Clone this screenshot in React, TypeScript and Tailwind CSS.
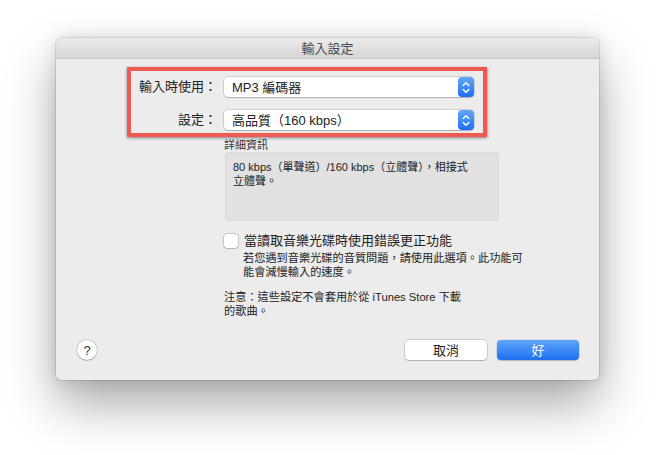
import React from "react";

const font = { fontFamily: '"Liberation Sans", "Noto Sans CJK TC", sans-serif' };

function Stepper() {
  return (
    <div className="flex h-full w-[16px] items-center justify-center rounded-[4px] bg-gradient-to-b from-[#64a6fa] to-[#1b6ef2]">
      <svg width="8" height="13" viewBox="0 0 8 13" fill="none" stroke="white" strokeWidth="1.4" strokeLinecap="round" strokeLinejoin="round">
        <path d="M1.2 4.6 L4 1.8 L6.8 4.6" />
        <path d="M1.2 8.4 L4 11.2 L6.8 8.4" />
      </svg>
    </div>
  );
}

function Select({ value }: { value: string }) {
  return (
    <div className="flex h-[20px] w-[250px] items-center justify-between rounded-[4px] bg-white pl-[8px] shadow-[0_0_0_0.5px_rgba(0,0,0,0.25),0_1px_1px_rgba(0,0,0,0.15)]">
      <span className="text-[13px] leading-none text-[#222]">{value}</span>
      <Stepper />
    </div>
  );
}

export default function App() {
  return (
    <div className="h-[455px] w-[656px] overflow-hidden bg-white pl-[56px] pt-[38px]" style={font}>
      <div className="flex h-[342px] w-[543px] flex-col overflow-hidden rounded-[5px] bg-[#ececec] shadow-[0_24px_50px_rgba(0,0,0,0.34),0_0_16px_rgba(0,0,0,0.12),0_0_0_0.5px_rgba(0,0,0,0.2)]">
        {/* Title bar */}
        <div className="flex h-[21px] items-center justify-center border-b border-[#c8c8c8] bg-gradient-to-b from-[#ebebeb] to-[#d5d5d5]">
          <span className="text-[13px] leading-none text-[#4a4a4a]">輸入設定</span>
        </div>

        {/* Red annotation frame with two selects */}
        <div className="ml-[71px] mt-[8px] flex h-[70px] w-[360px] flex-col border-[4px] border-[#ee5a51] pt-[6px] shadow-[0_1px_3px_rgba(0,0,0,0.45)]">
          <div className="flex items-center">
            <span className="w-[86px] text-right text-[13px] text-[#222]">輸入時使用：</span>
            <div className="ml-[7px]"><Select value="MP3 編碼器" /></div>
          </div>
          <div className="mt-[13px] flex items-center">
            <span className="w-[86px] text-right text-[13px] text-[#222]">設定：</span>
            <div className="ml-[7px]"><Select value="高品質（160 kbps）" /></div>
          </div>
        </div>

        <div className="ml-[168px] flex flex-col">
          <span className="mt-[1px] h-[14px] text-[11px] leading-[14px] text-[#333]">詳細資訊</span>
          <div className="ml-[1px] h-[69px] w-[274px] rounded-[4px] bg-[#e1e1e1] px-[8px] pt-[9px] text-[11px] leading-[13.5px] text-[#222] shadow-[inset_0_0_0_0.5px_rgba(0,0,0,0.06)]">
            80 kbps（單聲道）/160 kbps（立體聲），相接式
            <br />
            立體聲。
          </div>

          <div className="mt-[13px] flex items-center">
            <div className="h-[14px] w-[14px] rounded-[3px] bg-white shadow-[0_0_0_0.5px_rgba(0,0,0,0.3),0_1px_1px_rgba(0,0,0,0.1)]" />
            <span className="ml-[6px] text-[13px] leading-[14px] text-[#222]">當讀取音樂光碟時使用錯誤更正功能</span>
          </div>
          <div className="ml-[19px] mt-[4px] text-[11.2px] leading-[13.5px] text-[#222]">
            若您遇到音樂光碟的音質問題，請使用此選項。此功能可
            <br />
            能會減慢輸入的速度。
          </div>

          <div className="mt-[12px] text-[11.2px] leading-[13.5px] text-[#222]">
            注意：這些設定不會套用於從 iTunes Store 下載
            <br />
            的歌曲。
          </div>
        </div>

        {/* Bottom buttons */}
        <div className="mt-auto mb-[20px] flex items-center pl-[21px] pr-[20px]">
          <div className="flex h-[20px] w-[20px] items-center justify-center rounded-full bg-white text-[13px] leading-none text-[#333] shadow-[0_0_0_0.5px_rgba(0,0,0,0.25),0_1px_1px_rgba(0,0,0,0.15)]">
            ?
          </div>
          <div className="ml-auto flex gap-[10px]">
            <div className="flex h-[20px] w-[82px] items-center justify-center rounded-[4px] bg-white text-[13px] leading-none text-[#222] shadow-[0_0_0_0.5px_rgba(0,0,0,0.25),0_1px_1px_rgba(0,0,0,0.15)]">
              取消
            </div>
            <div className="flex h-[20px] w-[82px] items-center justify-center rounded-[4px] bg-gradient-to-b from-[#5fa3fa] to-[#1c6ef2] text-[13px] leading-none text-white shadow-[0_0_0_0.5px_rgba(0,0,0,0.15),0_1px_1px_rgba(0,0,0,0.15)]">
              好
            </div>
          </div>
        </div>
      </div>
    </div>
  );
}
